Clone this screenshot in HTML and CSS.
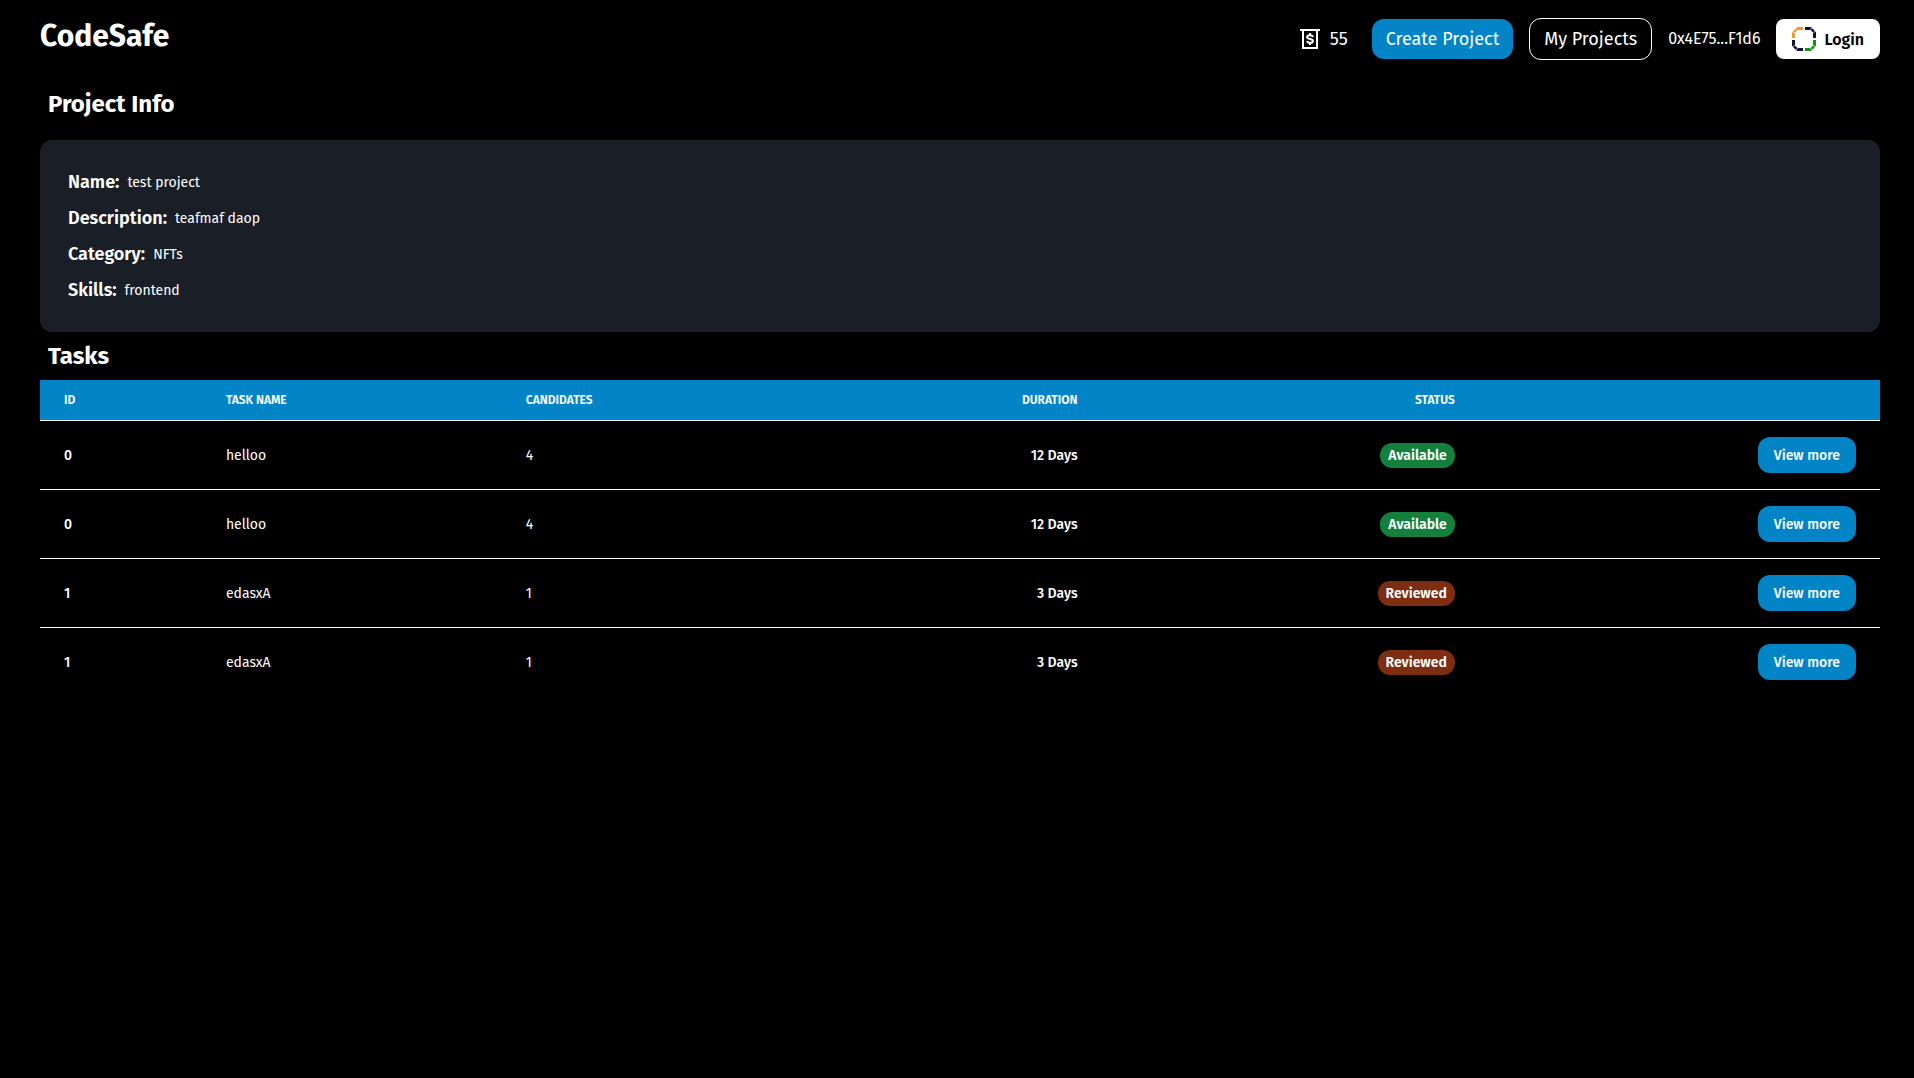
FILE: index.html
```html
<!DOCTYPE html>
<html lang="en">
<head>
<meta charset="utf-8">
<meta name="viewport" content="width=device-width, initial-scale=1">
<title>CodeSafe</title>
<link rel="stylesheet" href="styles.css">
</head>
<body>
<header class="topbar">
  <a class="brand" href="#">CodeSafe</a>
  <nav class="actions">
    <span class="balance">
      <svg width="20" height="20" viewBox="0 0 20 20" fill="none" stroke="#fff" aria-hidden="true">
        <path d="M0 1H20M3 1V19H17V1" stroke-width="2"/>
        <path d="M10 4V6M10 14V16M12.900 8.200C12.700 6.700 11.600 6.200 10 6.200C8.300 6.200 7.100 6.900 7.100 8.100C7.100 9.300 8.300 9.700 10 10C11.700 10.300 12.900 10.700 12.900 11.900C12.900 13.100 11.700 13.800 10 13.800C8.400 13.800 7.300 13.300 7.100 11.800" stroke-width="2"/>
      </svg>
      55
    </span>
    <button class="btn btn-primary" type="button">Create Project</button>
    <button class="btn btn-outline" type="button">My Projects</button>
    <span class="wallet">0x4E75...F1d6</span>
    <button class="btn-login" type="button">
      <svg width="24" height="24" viewBox="0 0 24 24" aria-hidden="true">
        <path fill="#f59331" d="M5 0H11V3H6L4 1ZM4 1.500L5.500 3L3 5.500L.8 4.500ZM0 5L3 6V11H0Z"/>
        <path fill="#11152c" d="M13 0H19L23.500 4.500L24 5V11H21V5.500L18.500 3H13Z"/>
        <path fill="#11152c" d="M0 13H3V18.500L5.500 21H11V24H5L0 19Z"/>
        <path fill="#129212" d="M21 13H24V19L19 24H13V21H18.500L21 18.500Z"/>
        <path fill="none" stroke="#fff" stroke-width=".6" d="M18.500 3L20 .5M21 5.500L23.800 4.300M3 18.500L.2 19.700M5.500 21L4 23.500M21 18.500L23.800 19.700M18.500 21L20 23.500"/>
      </svg>
      Login
    </button>
  </nav>
</header>
<main class="page">
  <h2 class="heading heading-info">Project Info</h2>
  <dl class="card">
    <div class="field"><dt>Name:</dt><dd>test project</dd></div>
    <div class="field"><dt>Description:</dt><dd>teafmaf daop</dd></div>
    <div class="field"><dt>Category:</dt><dd>NFTs</dd></div>
    <div class="field"><dt>Skills:</dt><dd>frontend</dd></div>
  </dl>
  <h2 class="heading heading-tasks">Tasks</h2>
  <table class="tasks">
    <colgroup>
      <col class="col-id"><col class="col-name"><col class="col-candidates"><col class="col-duration"><col class="col-status"><col class="col-action">
    </colgroup>
    <thead>
      <tr><th>ID</th><th>TASK NAME</th><th>CANDIDATES</th><th class="end">DURATION</th><th class="end">STATUS</th><td></td></tr>
    </thead>
    <tbody>
      <tr><td class="strong">0</td><td>helloo</td><td>4</td><td class="end strong">12 Days</td><td class="end"><span class="badge available">Available</span></td><td class="end"><button class="btn-more" type="button">View more</button></td></tr>
      <tr><td class="strong">0</td><td>helloo</td><td>4</td><td class="end strong">12 Days</td><td class="end"><span class="badge available">Available</span></td><td class="end"><button class="btn-more" type="button">View more</button></td></tr>
      <tr><td class="strong">1</td><td>edasxA</td><td>1</td><td class="end strong">3 Days</td><td class="end"><span class="badge reviewed">Reviewed</span></td><td class="end"><button class="btn-more" type="button">View more</button></td></tr>
      <tr><td class="strong">1</td><td>edasxA</td><td>1</td><td class="end strong">3 Days</td><td class="end"><span class="badge reviewed">Reviewed</span></td><td class="end"><button class="btn-more" type="button">View more</button></td></tr>
    </tbody>
  </table>
</main>
</body>
</html>
```
FILE: styles.css
```css
* { box-sizing: border-box; }

body {
  margin: 0;
  padding: 18px 34px 40px 40px;
  background: #000;
  color: #fff;
  font-family: "Fira Sans", Roboto, sans-serif;
  font-size: 14px;
  line-height: 21px;
}

button { font-family: inherit; border: 0; cursor: pointer; }

.topbar { display: flex; justify-content: space-between; align-items: flex-start; }
.brand { color: #fff; font-size: 30px; line-height: 36px; font-weight: 700; text-decoration: none; }
.actions { display: flex; align-items: center; gap: 16px; }
.balance { display: flex; align-items: center; gap: 10px; margin-right: 8px; font-size: 18px; line-height: 28px; }

.btn { height: 40px; padding: 0 14px; border-radius: 12px; color: #fff; font-size: 18px; }
.btn-primary { background: #0284c7; }
.btn-outline { height: 42px; border: 1px solid #fff; background: transparent; }
.wallet { font-size: 16px; line-height: 26px; }
.btn-login {
  display: flex;
  align-items: center;
  gap: 8px;
  height: 40px;
  padding: 0 16px;
  border-radius: 8px;
  background: #fff;
  color: #000;
  font-size: 16px;
  font-weight: 600;
}

.heading { padding-left: 8px; font-size: 24px; line-height: 32px; font-weight: 700; }
.heading-info { margin: 28px 0 20px; }
.heading-tasks { margin: 8px 0; }

.card {
  display: flex;
  flex-direction: column;
  gap: 7px;
  margin: 0;
  padding: 28px 28px 27px;
  border-radius: 12px;
  background: #1a1e26;
}
.field { display: flex; align-items: center; gap: 8px; }
.field dt { font-size: 18px; line-height: 29px; font-weight: 600; }
.field dd { margin: 0; }

.tasks { width: 100%; table-layout: fixed; border-collapse: separate; border-spacing: 0; }
.col-id { width: 8.8%; }
.col-name { width: 16.3%; }
.col-candidates { width: 16.3%; }
.col-duration { width: 16.3%; }
.col-status { width: 20.5%; }
.col-action { width: 21.8%; }
.tasks th, .tasks td { text-align: left; }
.tasks thead { background: #0284c7; }
.tasks thead th, .tasks thead td {
  padding: 12px 24px;
  border-bottom: 1px solid #fff;
  font-size: 12px;
  line-height: 16px;
  font-weight: 600;
}
.tasks tbody td { padding: 16px 24px; border-bottom: 1px solid #fff; }
.tasks tbody tr:last-child td { border-bottom: 0; }
.tasks .end { text-align: right; }
.tasks .strong { font-weight: 500; }

.badge { display: inline-block; padding: 2px 8px; border-radius: 12px; font-weight: 600; vertical-align: middle; }
.available { background: #15803d; }
.reviewed { background: #7c2d12; }
.btn-more {
  display: inline-block;
  height: 36px;
  padding: 0 16px;
  border-radius: 12px;
  background: #0284c7;
  color: #fff;
  font-size: 14px;
  font-weight: 500;
  vertical-align: middle;
}
```
